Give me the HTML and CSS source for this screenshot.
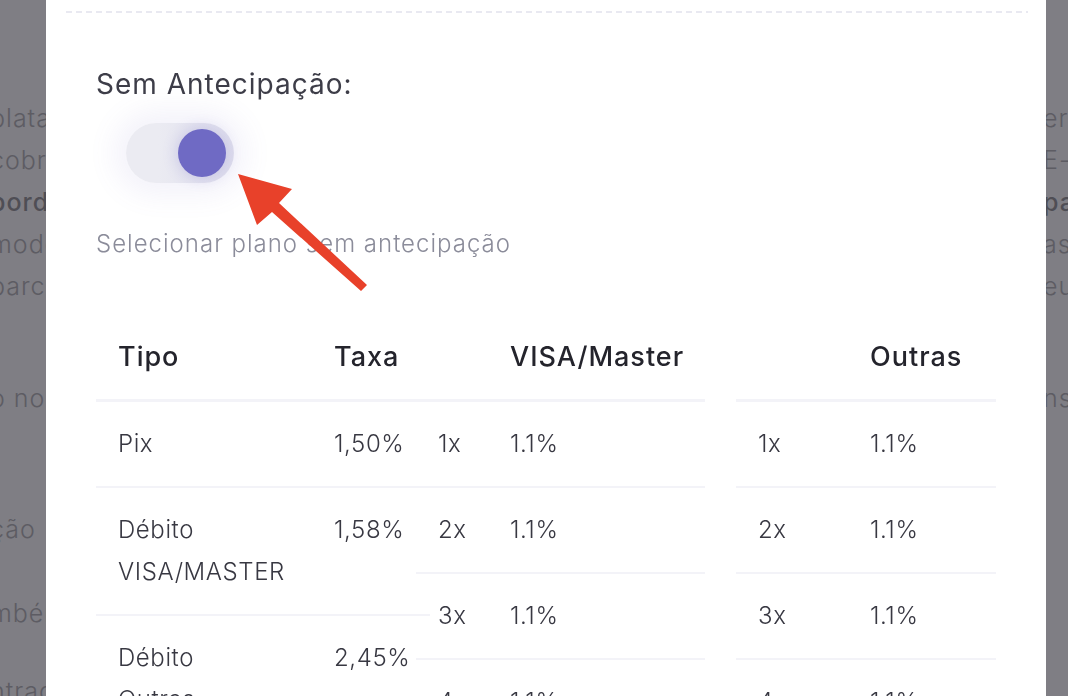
FILE: index.html
```html
<!DOCTYPE html>
<html lang="pt-BR">
<head>
    <meta charset="UTF-8">
    <title>Planos de taxas</title>
    <link rel="stylesheet" href="styles.css">
</head>
<body>
<!-- pagina por tras do modal -->
<div class="page">
    <div class="page-row"><span class="l">plataforma</span><span class="r">ermite</span></div>
    <div class="page-row"><span class="l">cobrança</span><span class="r">E-mail</span></div>
    <div class="page-row strong"><span class="l">bordero</span><span class="r">para</span></div>
    <div class="page-row"><span class="l">modelo</span><span class="r">as</span></div>
    <div class="page-row"><span class="l">parcela</span><span class="r">eu</span></div>
    <div class="page-row gap-1"><span class="l">o nome</span><span class="r">nsações</span></div>
    <div class="page-row gap-2"><span class="l">ção</span><span class="r"></span></div>
    <div class="page-row gap-3"><span class="l">mbém</span><span class="r"></span></div>
    <div class="page-row gap-4"><span class="l">ntrada</span><span class="r"></span></div>
</div>

<div class="modal">
    <div class="modal-head"></div>
    <div class="modal-body">
        <label class="field-label">Sem Antecipação:</label>
        <div class="switch-wrap">
            <span class="switch on"><span class="knob"></span></span>
        </div>
        <p class="hint">Selecionar plano sem antecipação</p>

        <div class="rates">
            <table class="tbl tbl-main">
                <colgroup><col class="c-tipo"><col class="c-taxa"></colgroup>
                <thead>
                <tr><th>Tipo</th><th>Taxa</th></tr>
                </thead>
                <tbody>
                <tr><td>Pix</td><td>1,50%</td></tr>
                <tr><td>Débito<br>VISA/MASTER</td><td>1,58%</td></tr>
                <tr><td>Débito<br>Outras</td><td>2,45%</td></tr>
                <tr><td>Crédito<br>à vista</td><td>2,99%</td></tr>
                </tbody>
            </table>

            <table class="tbl tbl-visa">
                <colgroup><col class="c-parc"><col></colgroup>
                <thead>
                <tr><th></th><th>VISA/Master</th></tr>
                </thead>
                <tbody>
                <tr><td>1x</td><td>1.1%</td></tr>
                <tr><td>2x</td><td>1.1%</td></tr>
                <tr><td>3x</td><td>1.1%</td></tr>
                <tr><td>4x</td><td>1.1%</td></tr>
                <tr><td>5x</td><td>1.1%</td></tr>
                </tbody>
            </table>

            <table class="tbl tbl-outras">
                <colgroup><col class="c-parc2"><col></colgroup>
                <thead>
                <tr><th></th><th>Outras</th></tr>
                </thead>
                <tbody>
                <tr><td>1x</td><td>1.1%</td></tr>
                <tr><td>2x</td><td>1.1%</td></tr>
                <tr><td>3x</td><td>1.1%</td></tr>
                <tr><td>4x</td><td>1.1%</td></tr>
                <tr><td>5x</td><td>1.1%</td></tr>
                </tbody>
            </table>
        </div>
    </div>

    <!-- seta apontando para o switch -->
    <svg class="pointer" width="190" height="140" viewBox="192 160 190 140">
        <polygon fill="#e8412a"
                 points="238,174 292,189 279,203 367,285 361,291 272,212 257,225"/>
    </svg>
</div>
</body>
</html>
```

FILE: styles.css
```css
* {
    margin: 0;
    padding: 0;
    box-sizing: border-box;
}

html, body {
    height: 100%;
    overflow: hidden;
}

body {
    background: #7f7e84;
    font-family: Inter, "Open Sans", "Liberation Sans", sans-serif;
}

/* pagina escurecida atras */
.page {
    padding-top: 97px;
    color: #5d5c63;
    font-size: 25px;
    font-weight: 300;
    letter-spacing: 1px;
}

.page-row {
    display: grid;
    grid-template-columns: 1043px 1fr;
    height: 42px;
    line-height: 42px;
    white-space: nowrap;
    overflow: hidden;
}

.page-row .l {
    margin-left: -10px;
}

.page-row.strong {
    font-weight: 500;
    color: #4f4e55;
}

.gap-1 { margin-top: 70px; }
.gap-2 { margin-top: 89px; }
.gap-3 { margin-top: 42px; }
.gap-4 { margin-top: 36px; }

/* modal */
.modal {
    position: fixed;
    left: 46px;
    top: 0;
    bottom: 0;
    width: 1000px;
    background: #fff;
}

.modal-head {
    margin: 11px 18px 0 20px;
    height: 2px;
    background: repeating-linear-gradient(90deg, #e9e9f1 0 6px, transparent 6px 10px);
}

.modal-body {
    padding: 0 50px;
}

.field-label {
    display: block;
    margin-top: 53px;
    font-size: 28px;
    line-height: 36px;
    letter-spacing: 1px;
    color: #3d3d48;
}

.switch-wrap {
    margin: 21px 0 0 30px;
}

.switch {
    display: flex;
    align-items: center;
    justify-content: flex-end;
    width: 108px;
    height: 60px;
    padding: 0 8px;
    border-radius: 30px;
    background: linear-gradient(90deg, #ebebf2 30%, #dedded 100%);
    box-shadow: 0 0 28px 12px rgba(118, 112, 200, .09);
}

.switch .knob {
    width: 48px;
    height: 48px;
    border-radius: 50%;
    background: #6f6ac4;
    box-shadow: 0 0 14px 2px rgba(111, 106, 196, .22);
}

.hint {
    margin-top: 45px;
    font-size: 24px;
    line-height: 32px;
    font-weight: 300;
    letter-spacing: 1px;
    color: #8b8c9a;
}

/* tabelas de taxas */
.rates {
    display: flex;
    align-items: flex-start;
    margin-top: 55px;
}

.tbl {
    border-collapse: collapse;
    table-layout: fixed;
}

.tbl th,
.tbl td {
    padding: 21px 22px;
    line-height: 42px;
    text-align: left;
    vertical-align: top;
    white-space: nowrap;
}

.tbl th {
    font-size: 27px;
    font-weight: 500;
    letter-spacing: 1px;
    color: #24242c;
    border-bottom: 3px solid #f3f3f8;
}

.tbl td {
    font-size: 24px;
    font-weight: 300;
    letter-spacing: .6px;
    color: #383842;
    border-bottom: 2px solid #f3f3f8;
}

.tbl-main { width: 334px; }
.tbl-main .c-tipo { width: 216px; }
.tbl-main .c-taxa { width: 118px; }

.tbl-visa {
    width: 289px;
    margin-left: -14px;
}
.tbl-visa .c-parc { width: 72px; }

.tbl-outras {
    width: 260px;
    margin-left: 31px;
}
.tbl-outras .c-parc2 { width: 112px; }

.pointer {
    position: absolute;
    left: 146px;
    top: 160px;
}
```
